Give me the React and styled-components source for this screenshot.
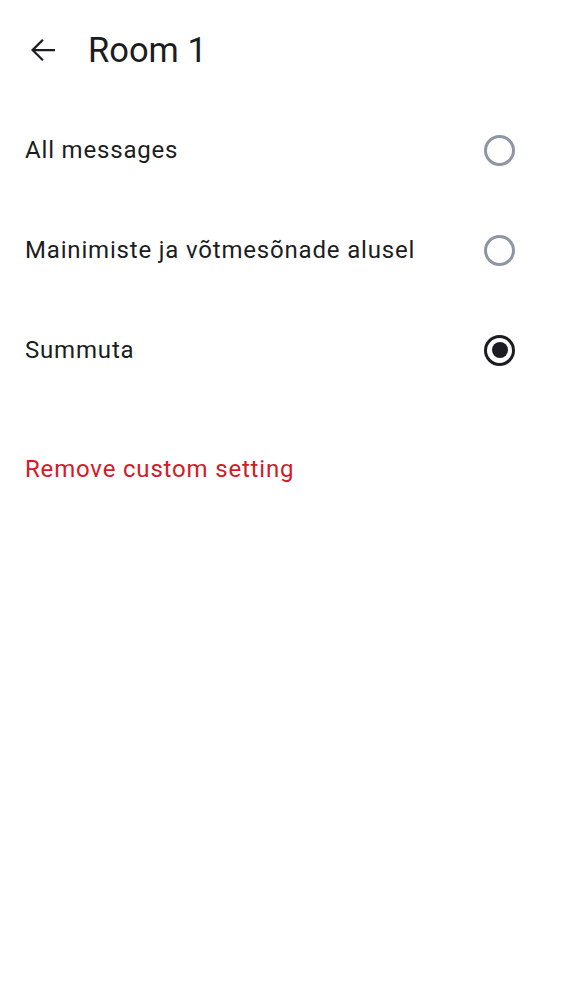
import React, { useState } from 'react';
import styled, { createGlobalStyle } from 'styled-components';

const GlobalStyle = createGlobalStyle`
  html, body {
    margin: 0;
    padding: 0;
    background: #ffffff;
  }
  body {
    font-family: Roboto, "Noto Sans", sans-serif;
    color: #1b1d22;
  }
`;

const options = [
  { id: 'all', label: 'All messages' },
  { id: 'mentions', label: 'Mainimiste ja võtmesõnade alusel' },
  { id: 'mute', label: 'Summuta' },
];

const App = () => {
  const [selected, setSelected] = useState('mute');

  return (
    <Screen>
      <GlobalStyle />
      <TopBar>
        <BackButton aria-label="Back">
          <svg width="36" height="36" viewBox="0 0 24 24">
            <path
              d="M20 11.25H6.87l5.6-5.6L11.4 4.6 4 12l7.4 7.4 1.06-1.05-5.6-5.6H20z"
              fill="#1b1d22"
            />
          </svg>
        </BackButton>
        <Title>Room 1</Title>
      </TopBar>

      <OptionList>
        {options.map((o) => (
          <OptionRow key={o.id} onClick={() => setSelected(o.id)}>
            <OptionLabel>{o.label}</OptionLabel>
            <Radio $checked={selected === o.id} />
          </OptionRow>
        ))}
      </OptionList>

      <RemoveRow>
        <RemoveText>Remove custom setting</RemoveText>
      </RemoveRow>
    </Screen>
  );
};

export default App;

const Screen = styled.div`
  width: 562px;
  min-height: 1000px;
  background: #ffffff;
  display: flex;
  flex-direction: column;
`;

const TopBar = styled.header`
  height: 100px;
  display: flex;
  align-items: center;
  padding: 0 0 0 25px;
  gap: 27px;
  box-sizing: border-box;
`;

const BackButton = styled.div`
  width: 36px;
  height: 36px;
  display: flex;
  align-items: center;
  justify-content: center;
`;

const Title = styled.h1`
  margin: 0;
  font-size: 34.5px;
  font-weight: 400;
  color: #1b1d22;
  letter-spacing: 0;
`;

const OptionList = styled.div`
  display: flex;
  flex-direction: column;
`;

const OptionRow = styled.div`
  height: 100px;
  display: flex;
  align-items: center;
  justify-content: space-between;
  padding: 0 47px 0 25px;
  cursor: pointer;
`;

const OptionLabel = styled.span`
  font-size: 24px;
  letter-spacing: 0.82px;
  color: #1b1d22;
`;

const Radio = styled.span`
  width: 31px;
  height: 31px;
  box-sizing: border-box;
  border-radius: 50%;
  border: 3px solid ${(p) => (p.$checked ? '#1b1d22' : '#8d96a2')};
  display: flex;
  align-items: center;
  justify-content: center;

  &::after {
    content: '';
    width: 16px;
    height: 16px;
    border-radius: 50%;
    background: #1b1d22;
    display: ${(p) => (p.$checked ? 'block' : 'none')};
  }
`;

const RemoveRow = styled.div`
  padding: 49px 25px 0;
  height: 40px;
  display: flex;
  align-items: center;
`;

const RemoveText = styled.span`
  font-size: 24px;
  letter-spacing: 0.82px;
  color: #d51928;
`;
